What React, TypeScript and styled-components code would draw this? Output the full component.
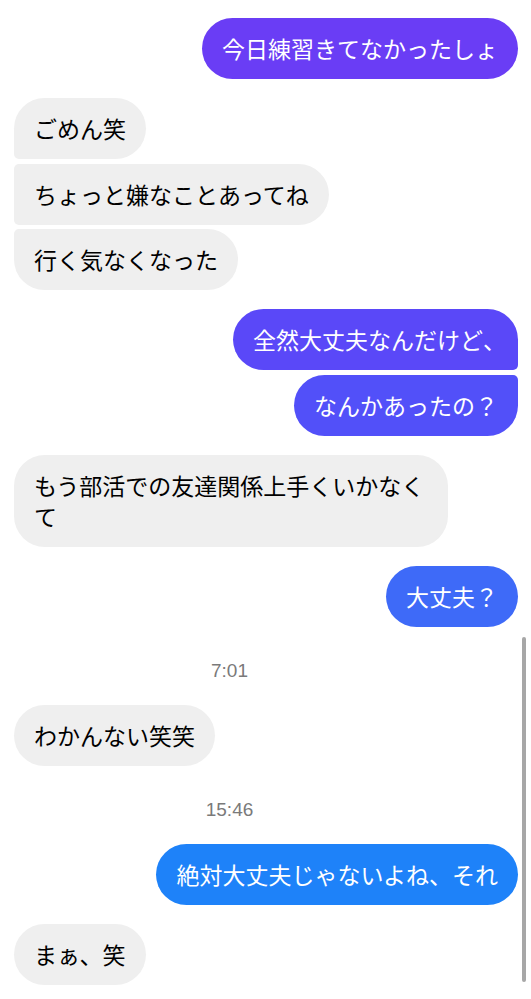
import React from "react";
import styled, { createGlobalStyle, css } from "styled-components";

const GlobalStyle = createGlobalStyle`
  html, body {
    margin: 0;
    padding: 0;
    background: #ffffff;
  }
  body {
    font-family: "Noto Sans CJK JP", "Noto Sans", sans-serif;
    -webkit-font-smoothing: antialiased;
  }
`;

const Screen = styled.div`
  position: relative;
  width: 531px;
  min-height: 999px;
  box-sizing: border-box;
  background: #ffffff;
  overflow: hidden;
`;

const Thread = styled.div`
  display: flex;
  flex-direction: column;
  gap: 19px;
  padding: 18px 13px 13px 14px;
`;

const Group = styled.div<{ $side: "in" | "out" }>`
  display: flex;
  flex-direction: column;
  gap: 4.5px;
  align-items: ${(p) => (p.$side === "out" ? "flex-end" : "flex-start")};
`;

type Pos = "single" | "first" | "middle" | "last";

const BIG = 31;
const SMALL = 5;

const radius = (side: "in" | "out", pos: Pos) => {
  const top = pos === "single" || pos === "first" ? BIG : SMALL;
  const bottom = pos === "single" || pos === "last" ? BIG : SMALL;
  if (side === "in") {
    return css`
      border-radius: ${top}px ${BIG}px ${BIG}px ${bottom}px;
    `;
  }
  return css`
    border-radius: ${BIG}px ${top}px ${bottom}px ${BIG}px;
  `;
};

const Bubble = styled.div<{ $side: "in" | "out"; $pos: Pos; $color?: string }>`
  box-sizing: border-box;
  max-width: 434px;
  padding: 15px 20px;
  font-family: "Noto Sans CJK JP", "Noto Sans", sans-serif;
  font-size: 23px;
  line-height: 31px;
  letter-spacing: 0;
  word-break: break-all;
  background: ${(p) => (p.$side === "out" ? p.$color ?? "#3b82f6" : "#efefef")};
  color: ${(p) => (p.$side === "out" ? "#ffffff" : "#000000")};
  ${(p) => radius(p.$side, p.$pos)}
`;

const EndPunct = styled.span`
  display: inline-block;
  width: 15px;
  overflow: visible;
  white-space: nowrap;
`;

const TimeStamp = styled.div`
  display: flex;
  justify-content: center;
  padding-right: 73px;
  margin: 14px 0 4px;
  font-family: "Liberation Sans", Arial, sans-serif;
  font-size: 19px;
  line-height: 22px;
  color: #7a7a7a;
`;

const ScrollBar = styled.div`
  position: absolute;
  top: 637px;
  right: 5px;
  width: 4px;
  height: 345px;
  border-radius: 2px;
  background: #a7a7a7;
`;

export default function App() {
  return (
    <>
      <GlobalStyle />
      <Screen>
        <Thread>
          <Group $side="out">
            <Bubble $side="out" $pos="single" $color="#6a3df5">
              今日練習きてなかったしょ
            </Bubble>
          </Group>

          <Group $side="in">
            <Bubble $side="in" $pos="first">ごめん笑</Bubble>
            <Bubble $side="in" $pos="middle">ちょっと嫌なことあってね</Bubble>
            <Bubble $side="in" $pos="last">行く気なくなった</Bubble>
          </Group>

          <Group $side="out">
            <Bubble $side="out" $pos="first" $color="#5a48f8">
              全然大丈夫なんだけど<EndPunct>、</EndPunct>
            </Bubble>
            <Bubble $side="out" $pos="last" $color="#5250f9">
              なんかあったの？
            </Bubble>
          </Group>

          <Group $side="in">
            <Bubble $side="in" $pos="single">
              もう部活での友達関係上手くいかなくて
            </Bubble>
          </Group>

          <Group $side="out">
            <Bubble $side="out" $pos="single" $color="#3e6af8">
              大丈夫？
            </Bubble>
          </Group>

          <TimeStamp>7:01</TimeStamp>

          <Group $side="in">
            <Bubble $side="in" $pos="single">わかんない笑笑</Bubble>
          </Group>

          <TimeStamp>15:46</TimeStamp>

          <Group $side="out">
            <Bubble $side="out" $pos="single" $color="#1e82f9">
              絶対大丈夫じゃないよね、それ
            </Bubble>
          </Group>

          <Group $side="in">
            <Bubble $side="in" $pos="single">まぁ、笑</Bubble>
          </Group>
        </Thread>
        <ScrollBar />
      </Screen>
    </>
  );
}
